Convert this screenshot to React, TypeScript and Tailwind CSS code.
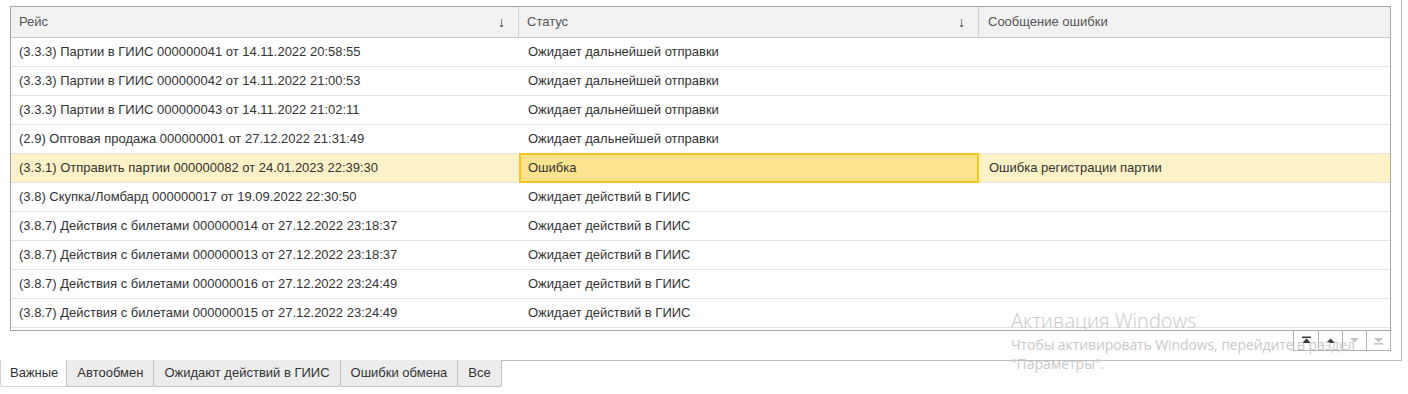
import React from "react";

interface Row {
  trip: string;
  status: string;
  error: string;
  active?: boolean;
}

const rows: Row[] = [
  { trip: "(3.3.3) Партии в ГИИС 000000041 от 14.11.2022 20:58:55", status: "Ожидает дальнейшей отправки", error: "" },
  { trip: "(3.3.3) Партии в ГИИС 000000042 от 14.11.2022 21:00:53", status: "Ожидает дальнейшей отправки", error: "" },
  { trip: "(3.3.3) Партии в ГИИС 000000043 от 14.11.2022 21:02:11", status: "Ожидает дальнейшей отправки", error: "" },
  { trip: "(2.9) Оптовая продажа 000000001 от 27.12.2022 21:31:49", status: "Ожидает дальнейшей отправки", error: "" },
  { trip: "(3.3.1) Отправить партии 000000082 от 24.01.2023 22:39:30", status: "Ошибка", error: "Ошибка регистрации партии", active: true },
  { trip: "(3.8) Скупка/Ломбард 000000017 от 19.09.2022 22:30:50", status: "Ожидает действий в ГИИС", error: "" },
  { trip: "(3.8.7) Действия с билетами 000000014 от 27.12.2022 23:18:37", status: "Ожидает действий в ГИИС", error: "" },
  { trip: "(3.8.7) Действия с билетами 000000013 от 27.12.2022 23:18:37", status: "Ожидает действий в ГИИС", error: "" },
  { trip: "(3.8.7) Действия с билетами 000000016 от 27.12.2022 23:24:49", status: "Ожидает действий в ГИИС", error: "" },
  { trip: "(3.8.7) Действия с билетами 000000015 от 27.12.2022 23:24:49", status: "Ожидает действий в ГИИС", error: "" },
];

const tabs = ["Важные", "Автообмен", "Ожидают действий в ГИИС", "Ошибки обмена", "Все"];

function ScrollBtn({ kind, dim }: { kind: "first" | "up" | "down" | "last"; dim?: boolean }) {
  const c = dim ? "#c4c4c4" : "#3a3a3a";
  return (
    <div className="w-[24px] h-full flex items-center justify-center border-l border-[#b4b4b4] first:border-l-0">
      <svg width="11" height="9" viewBox="0 0 11 9">
        {kind === "first" && (
          <>
            <rect x="1" y="0.5" width="9" height="1.6" fill={c} />
            <path d="M5.5 2.5 L10 7 L1 7 Z" fill={c} />
          </>
        )}
        {kind === "up" && <path d="M5.5 2.5 L10 7 L1 7 Z" fill={c} />}
        {kind === "down" && <path d="M1 2 L10 2 L5.5 6.5 Z" fill={c} />}
        {kind === "last" && (
          <>
            <path d="M1 2 L10 2 L5.5 6.5 Z" fill={c} />
            <rect x="1" y="7" width="9" height="1.6" fill={c} />
          </>
        )}
      </svg>
    </div>
  );
}

export default function App() {
  return (
    <div className="relative w-[1408px] h-[394px] bg-white text-[13px] text-[#333] overflow-hidden" style={{ fontFamily: '"Liberation Sans", Arial, sans-serif' }}>
      <div className="w-[1402px] h-[361px] border-r border-b border-[#bcbcbc] pl-[10px] pt-[6px]">
        <div className="w-[1381px] border border-[#a6a6a6]">
          <div className="grid grid-cols-[508px_460px_1fr] h-[31px] bg-[#f2f2f2] border-b border-[#c8c8c8] text-[#555]">
            <div className="flex items-center justify-between pl-[8px] pr-[13px] border-r border-[#d0d0d0]">
              <span>Рейс</span>
              <span className="text-[#333] text-[14px]">↓</span>
            </div>
            <div className="flex items-center justify-between pl-[8px] pr-[13px] border-r border-[#d0d0d0]">
              <span>Статус</span>
              <span className="text-[#333] text-[14px]">↓</span>
            </div>
            <div className="flex items-center pl-[9px]">
              <span>Сообщение ошибки</span>
            </div>
          </div>
          {rows.map((r, i) => (
            <div
              key={i}
              className={
                "grid grid-cols-[508px_460px_1fr] h-[29px] border-b border-[#e4e4e4] last:border-b-0 " +
                (r.active ? "bg-[#fdf2c7]" : "bg-white")
              }
            >
              <div className="flex items-center pl-[8px] whitespace-nowrap">{r.trip}</div>
              {r.active ? (
                <div className="flex items-center pl-[7px] bg-[#fde38e] border-2 border-[#f6c81c] -my-px">{r.status}</div>
              ) : (
                <div className="flex items-center pl-[9px] whitespace-nowrap">{r.status}</div>
              )}
              <div className="flex items-center pl-[10px] whitespace-nowrap">{r.error}</div>
            </div>
          ))}
          <div className="h-[2px]" />
        </div>
        <div className="flex justify-end w-[1381px]">
          <div className="flex h-[20px] border border-t-0 border-[#b4b4b4] bg-white">
            <ScrollBtn kind="first" />
            <ScrollBtn kind="up" />
            <ScrollBtn kind="down" dim />
            <ScrollBtn kind="last" dim />
          </div>
        </div>
      </div>

      <div className="flex -mt-px">
        {tabs.map((t, i) =>
          i === 0 ? (
            <div key={t} className="h-[27px] px-[9px] flex items-center bg-white border-b border-l border-[#d6d6d6] rounded-bl-[3px] text-[#333]">
              {t}
            </div>
          ) : (
            <div key={t} className="h-[27px] px-[10px] flex items-center bg-[#ececec] border border-[#c2c2c2] border-t-0 -ml-px rounded-b-[3px] text-[#333]">
              {t}
            </div>
          )
        )}
      </div>

      <div className="absolute left-[1011px] top-[311px] text-[#c9c9c9] leading-none pointer-events-none" style={{ fontFamily: '"Open Sans", "Noto Sans", sans-serif' }}>
        <div className="text-[20px] font-light">Активация Windows</div>
        <div className="text-[14px] mt-[7px] tracking-[-0.1px]">Чтобы активировать Windows, перейдите в раздел</div>
        <div className="text-[14px] mt-[5px]">"Параметры".</div>
      </div>
    </div>
  );
}
